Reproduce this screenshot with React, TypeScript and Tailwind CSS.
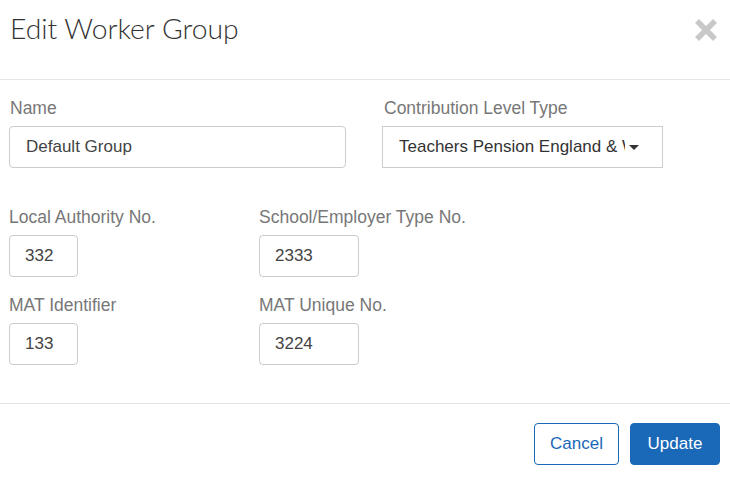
import React from 'react';

const Field = ({ label, value, width }: { label: string; value: string; width: string }) => (
  <div className="w-[250px] flex flex-col">
    <label className="text-[17.5px] leading-[20px] text-[#777] mb-[8px] whitespace-nowrap">{label}</label>
    <div className={`${width} h-[42px] border border-[#ccc] rounded-[4px] px-[15px] flex items-center text-[17px] text-[#444]`}>{value}</div>
  </div>
);

export default function App() {
  return (
    <div className="w-[730px] h-[481px] bg-white font-['Liberation_Sans',Arial,sans-serif] flex flex-col">
      <div className="h-[80px] border-b border-[#e5e5e5] flex items-start justify-between pl-[10px] pr-[12px] pt-[10px]">
        <h2 className="font-['Lato',sans-serif] font-light text-[28.3px] leading-[36px] text-[#333]">Edit Worker Group</h2>
        <svg className="mt-[8px]" width="24" height="24" viewBox="0 0 24 24">
          <path d="M3 3 L21 21 M21 3 L3 21" stroke="#c8c8c8" strokeWidth="5.5" strokeLinecap="butt" />
        </svg>
      </div>

      <div className="flex-1 border-b border-[#e5e5e5] px-[9px] pt-[18px]">
        <div className="flex">
          <div className="w-[373px] flex flex-col">
            <label className="text-[17.5px] leading-[20px] text-[#777] mb-[8px] pl-[1px]">Name</label>
            <div className="w-[337px] h-[42px] border border-[#ccc] rounded-[4px] px-[16px] flex items-center text-[17px] text-[#444]">Default Group</div>
          </div>
          <div className="flex flex-col">
            <label className="text-[17.5px] leading-[20px] text-[#777] mb-[8px] pl-[2px]">Contribution Level Type</label>
            <div className="w-[281px] h-[42px] border border-[#ccc] pl-[16px] pr-[14px] flex items-center text-[17px] text-[#333]">
              <span className="whitespace-nowrap overflow-hidden w-[226px]">Teachers Pension England &amp; Wales</span>
              <span className="ml-[4px] w-0 h-0 border-l-[5px] border-r-[5px] border-t-[5px] border-l-transparent border-r-transparent border-t-[#333]" />
            </div>
          </div>
        </div>

        <div className="flex mt-[39px]">
          <Field label="Local Authority No." value="332" width="w-[69px]" />
          <Field label="School/Employer Type No." value="2333" width="w-[100px]" />
        </div>
        <div className="flex mt-[18px]">
          <Field label="MAT Identifier" value="133" width="w-[69px]" />
          <Field label="MAT Unique No." value="3224" width="w-[100px]" />
        </div>
      </div>

      <div className="h-[77px] flex items-start justify-end gap-[11px] pr-[10px] pt-[19px]">
        <button className="h-[42px] w-[85px] border border-[#1a68b8] rounded-[4px] text-[#1a68b8] text-[17px] bg-white">Cancel</button>
        <button className="h-[42px] w-[90px] border border-[#1a68b8] rounded-[4px] text-white text-[17px] bg-[#1a68b8]">Update</button>
      </div>
    </div>
  );
}
